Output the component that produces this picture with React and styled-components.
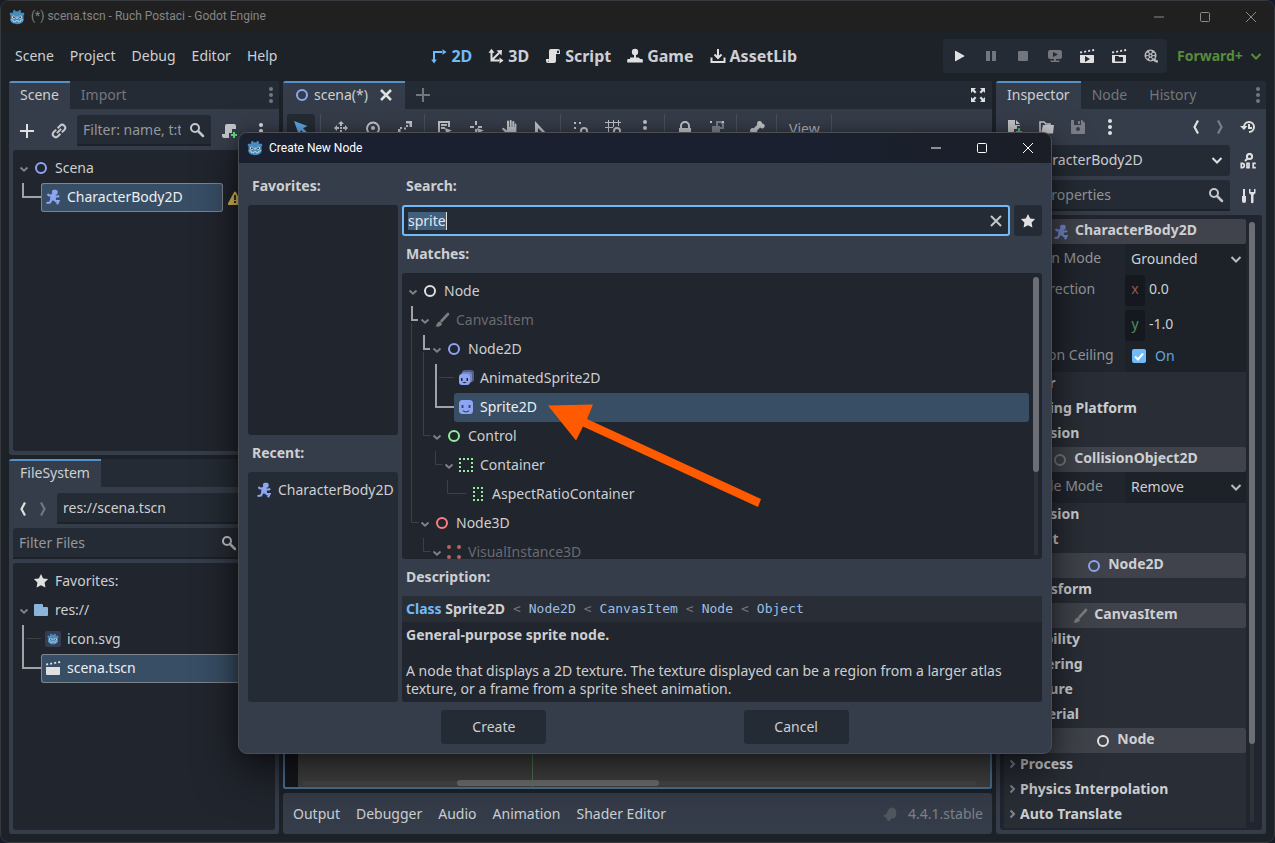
import React, { useEffect, useRef } from "react";
import styled, { createGlobalStyle } from "styled-components";

const c = {
  base: "#363d4a",
  dark: "#252b34",
  darker: "#1d2229",
  tree: "#21252d",
  section: "#292d35",
  header: "#40434b",
  accent: "#70bafa",
  accentDim: "#5591c7",
  select: "#384e65",
  text: "#cdcfd2",
  bright: "#e0e0e0",
  muted: "#73767d",
  blue: "#8da5f3",
  green: "#8eef97",
  red: "#fc7f7f",
};

const Global = createGlobalStyle`
  *, *::before, *::after { box-sizing: border-box; }
  body {
    margin: 0;
    background: #171b2a;
    color: ${c.text};
    font: 14px/18px "Noto Sans", sans-serif;
    overflow: hidden;
  }
  button, input, select { font: inherit; color: inherit; margin: 0; }
  button { background: none; border: 0; padding: 0; }
  ul { list-style: none; margin: 0; padding: 0; }
`;

/* ---------- icons ---------- */

const Svg = styled.svg`
  display: block;
  flex: none;
  width: ${(p) => p.$size || 16}px;
  height: ${(p) => p.$size || 16}px;
  color: ${(p) => p.$color || c.bright};
  fill: currentColor;
`;

const L = ({ d, w = 2, ...rest }) => (
  <path d={d} fill="none" stroke="currentColor" strokeWidth={w} {...rest} />
);

const clapDots = (
  <path d="M1 3.6 3 3.2 3.3 5 1.3 5.4zM5 2.9l2-.4.3 1.8-2 .4zM9 2.2l2-.4.3 1.8-2 .4zM13 1.4l2-.4.3 1.9-2 .4z" />
);

const art = {
  add: <path d="M7 1v6H1v2h6v6h2V9h6V7H9V1z" />,
  link: (
    <g transform="rotate(-45 8 8)">
      <L d="M7 5H3.5a3 3 0 0 0 0 6H7M9 5h3.5a3 3 0 0 1 0 6H9M5 8h6" />
    </g>
  ),
  search: (
    <>
      <circle cx="6" cy="6" r="4" fill="none" stroke="currentColor" strokeWidth="2" />
      <L d="M9 9l5 5" w={2.5} strokeLinecap="round" />
    </>
  ),
  script: (
    <path
      fillRule="evenodd"
      d="M6 1a2 2 0 0 0-2 2v8H1v2a2 2 0 0 0 2 2h6a2 2 0 0 0 2-2V6h4V3a2 2 0 0 0-2-2zM12 3.5a1 1 0 0 1 2 0V5h-2zM4 12v1a1 1 0 0 1-1 1z"
    />
  ),
  scriptAdd: (
    <>
      <path d="M6 1a2 2 0 0 0-2 2v8H1v2a2 2 0 0 0 2 2h5v-5h3V6h4V3a2 2 0 0 0-2-2z" />
      <path d="M12 9h2v2h2v2h-2v2h-2v-2h-2v-2h2z" fill="#5fdf80" />
    </>
  ),
  dots: (
    <>
      <circle cx="8" cy="2" r="2" />
      <circle cx="8" cy="8" r="2" />
      <circle cx="8" cy="14" r="2" />
    </>
  ),
  down: <L d="M3.500 6l4.500 4.500L12.500 6" />,
  arrow: <L d="M4 6.300L8 10l4-3.700" w={2.200} />,
  right: <L d="M6.500 4.500L10 8l-3.500 3.500" />,
  prev: <L d="M10 1.500L6.500 8l3.500 6.500" w={2.200} />,
  next: <L d="M6 1.500L9.500 8 6 14.500" w={2.200} />,
  ring: <circle cx="8" cy="8" r="5" fill="none" stroke="currentColor" strokeWidth="2" />,
  runner: (
    <>
      <rect x="7" y=".8" width="5.600" height="5" rx="1.800" />
      <path d="M6 5h4.500l.5 5-1 1.500H6L5 10z" />
      <L d="M6.500 6.500H4L2.500 5M10 7.500h3l1-1M6.500 10.500L5 13.500 1.500 14M9 10.500l2 1.700h2.500L12 15.200" w={2.200} />
    </>
  ),
  warning: (
    <>
      <path d="M8 1.500a1 1 0 0 0-.9.5L1 13.500A1 1 0 0 0 1.900 15h12.200a1 1 0 0 0 .9-1.500L8.900 2a1 1 0 0 0-.9-.5z" />
      <path d="M7 5h2v5H7zM7 11h2v2H7z" fill="#3a3320" />
    </>
  ),
  close: <L d="M3 3l10 10M13 3L3 13" w={2.500} />,
  clear: <L d="M3 3l10 10M13 3L3 13" />,
  star: <path d="M8 1l2.200 4.400 4.900.7-3.500 3.500.8 4.900L8 12.200l-4.400 2.300.8-4.900L.9 6.100l4.900-.7z" />,
  folder: <path d="M2 2a1 1 0 0 0-1 1v10a1 1 0 0 0 1 1h12a1 1 0 0 0 1-1V6a1 1 0 0 0-1-1h-4V3a1 1 0 0 0-1-1z" />,
  clapper: (
    <>
      {clapDots}
      <path d="M1 7h14v7a1 1 0 0 1-1 1H2a1 1 0 0 1-1-1z" />
    </>
  ),
  playScene: (
    <>
      {clapDots}
      <path fillRule="evenodd" d="M1 7h14v7a1 1 0 0 1-1 1H2a1 1 0 0 1-1-1zM6 8v6l5-3z" />
    </>
  ),
  playCustom: (
    <>
      {clapDots}
      <path fillRule="evenodd" d="M1 7h14v7a1 1 0 0 1-1 1H2a1 1 0 0 1-1-1zM4 8v5.500h8V9H8L7.500 8z" />
    </>
  ),
  play: <path d="M4 3.500v9a.7.7 0 0 0 1 .6l8-4.500a.7.7 0 0 0 0-1.200L5 2.900a.7.7 0 0 0-1 .6z" />,
  pause: <path d="M3 3h4v10H3zM9 3h4v10H9z" />,
  stop: <rect x="3" y="3" width="10" height="10" rx="1" />,
  remote: (
    <path
      fillRule="evenodd"
      d="M3 2a2 2 0 0 0-2 2v5a2 2 0 0 0 2 2h4v1.500H3.500V14h9v-1.500H9V11h4a2 2 0 0 0 2-2V4a2 2 0 0 0-2-2zM6 4l5 2.500L6 9z"
    />
  ),
  movie: (
    <path
      fillRule="evenodd"
      d="M7.500 1.500a6 6 0 1 0 3 11.200c1 1.300 2.500 2 4.500 1.800v-2c-1.500 0-2.300-.8-2.300-2A6 6 0 0 0 7.500 1.500zm0 1.300a1.300 1.300 0 1 1 0 2.600 1.300 1.300 0 0 1 0-2.600zm-3 1.900a1.300 1.300 0 1 1 0 2.600 1.300 1.300 0 0 1 0-2.600zm6 0a1.300 1.300 0 1 1 0 2.600 1.300 1.300 0 0 1 0-2.600zm-3 2a.9.900 0 1 1 0 1.800.9.900 0 0 1 0-1.800zm-3 1.300a1.300 1.300 0 1 1 0 2.600 1.300 1.300 0 0 1 0-2.600zm6 0a1.300 1.300 0 1 1 0 2.600 1.300 1.300 0 0 1 0-2.600zm-3 1.700a1.300 1.300 0 1 1 0 2.600 1.300 1.300 0 0 1 0-2.600z"
    />
  ),
  ws2d: (
    <>
      <L d="M3 12V4h8" />
      <path d="M3 15.500L.2 11.500h5.600zM15.500 4L11.500 1.200v5.600z" />
    </>
  ),
  ws3d: (
    <>
      <L d="M3.500 4v8.500h8M4 12l7-7" />
      <path d="M3.500 .8L.5 4.800h6zM15.500 12.500l-4-3v6zM14 2L8.500 2.500 13.500 7.500z" />
    </>
  ),
  game: (
    <>
      <circle cx="8" cy="4" r="3.200" />
      <path d="M7 6h2v3.500h2a2 2 0 0 1 2 1.500h2a1 1 0 0 1 .8 1v2.500H.2V12a1 1 0 0 1 .8-1h2V9.500h4z" />
    </>
  ),
  download: <L d="M8 1v8M4.500 6.500L8 10l3.500-3.500M1.500 9.500V14h13V9.500" />,
  expand: (
    <path d="M1 1h5L4.300 2.700l2.200 2.200-1.600 1.600L2.700 4.300 1 6zM15 1v5l-1.700-1.700-2.200 2.200-1.600-1.600 2.200-2.200L10 1zM1 15v-5l1.700 1.700 2.200-2.200 1.600 1.600-2.200 2.200L6 15zM15 15h-5l1.700-1.700-2.200-2.200 1.600-1.600 2.200 2.200L15 10z" />
  ),
  cursor: <path d="M1 1l4.800 13.500 2.300-4.200 4.200 4.200 2-2-4.200-4.200L14.500 6z" />,
  move: (
    <>
      <path d="M8 1l3 3H5zM8 15l-3-3h6zM1 8l3-3v6zM15 8l-3 3V5z" />
      <path d="M7 7h2v2H7zM7 4h2v2H7zM7 10h2v2H7zM4 7h2v2H4zM10 7h2v2h-2z" />
    </>
  ),
  rotate: (
    <>
      <L d="M4 13a6 6 0 1 1 8 0" />
      <circle cx="8" cy="8" r="2" />
    </>
  ),
  scale: (
    <>
      <path d="M9 1h6v6h-2.500V3.500H9zM1 9h2.500v3.500H7V15H1z" />
      <path d="M9 5h2v2H9zM7 7.500h2v2H7zM3 7h2v2H3z" />
    </>
  ),
  list: (
    <>
      <L d="M2 15V2h10v5M4 5h6M4 8h4" />
      <path d="M8 8l7 2.500-3 1 3 3-1.500 1.500-3-3-1 2.500z" />
    </>
  ),
  pivot: (
    <>
      <L d="M7 1v4M1 7h4M9 7h4M7 9v4" />
      <path d="M8 8l7 2.500-3 1 3 3-1.500 1.500-3-3-1 2.500z" />
    </>
  ),
  hand: (
    <path d="M6 1.500a1 1 0 0 1 2 0V7h.7V1a1 1 0 0 1 2 0v6h.600V2a1 1 0 0 1 2 0v5h.4V4a.9.900 0 0 1 1.700 0v7a4 4 0 0 1-4 4H9c-2 0-3-.8-4-2L1.500 9.500a1 1 0 0 1 1.600-1.200L6 10.500z" />
  ),
  ruler: <path fillRule="evenodd" d="M2 1v14h13zM5 8l4 4H5z" />,
  snap: (
    <>
      <path d="M1 2h2v2H1zM6 2h2v2H6zM1 7h2v2H1zM1 12h2v2H1z" />
      <L d="M8 15v-4a3 3 0 0 1 6 0v4" />
    </>
  ),
  grid: (
    <>
      <L d="M3.500 0v14M8.500 0v7M13.500 0v6M0 2.500h16M0 7.500h8M0 12.500h6" w={1} />
      <L d="M9 15v-4a3 3 0 0 1 6 0v4" />
    </>
  ),
  lock: (
    <path
      fillRule="evenodd"
      d="M8 1a5 5 0 0 0-5 5v2H2v7h12V8h-1V6a5 5 0 0 0-5-5zm0 2a3 3 0 0 1 3 3v2H5V6a3 3 0 0 1 3-3z"
    />
  ),
  group: (
    <>
      <path d="M1 1h2v2H1zM13 1h2v2h-2zM1 13h2v2H1zM13 13h2v2h-2z" />
      <path fillRule="evenodd" opacity=".5" d="M7 1h6v2h2v6h-4v4H3V6h4zM9 3v3h2v1h2V4h-1V3z" />
    </>
  ),
  bone: <path d="M10.500 1A2.500 2.500 0 0 0 8.300 4.700L4.700 8.300A2.500 2.500 0 1 0 3.500 13a2.500 2.500 0 1 0 4.400-2.200l3.300-3.300A2.500 2.500 0 1 0 13 3.500 2.500 2.500 0 0 0 10.500 1z" />,
  fileAdd: (
    <>
      <path d="M2 1v14h6v-5h3V7h3V6H9V1zM10 1v4h4z" />
      <path d="M12 9h2v3h2v2h-2v2h-2v-2h-2v-2h2z" fill="#4fb96c" />
    </>
  ),
  open: (
    <>
      <L d="M2 14V3h4l2 2h4v2" w={1.500} />
      <path d="M5 6h11l-1 8.500H3z" />
    </>
  ),
  save: (
    <path
      fillRule="evenodd"
      d="M2 1a1 1 0 0 0-1 1v12a1 1 0 0 0 1 1h12a1 1 0 0 0 1-1V4l-3-3h-1v5H4V1zm6 1v3h2V2zM8 8a2 2 0 1 1 0 4 2 2 0 0 1 0-4z"
    />
  ),
  history: (
    <>
      <L d="M4 8a5 5 0 1 1 5 5M9 5v4h3" />
      <path d="M0 7h7.500L4 11z" />
    </>
  ),
  doc: (
    <>
      <circle cx="9.500" cy="3.500" r="2.600" fill="none" stroke="currentColor" strokeWidth="2" />
      <L d="M7.500 5.500L5 8" />
      <L d="M1.300 9.500v6M1 10.400h1.200a2.100 2.100 0 0 1 0 4.200H1M7 10.400h2v4.200H7zM15.800 10.400h-2.600v4.200h2.600" w={1.700} />
    </>
  ),
  tools: (
    <>
      <L d="M4 1v8" w={2} />
      <path d="M2 8h4v5a2 2 0 0 1-4 0z" />
      <path d="M9 1v4l2 2v7a1.200 1.200 0 0 0 2.500 0V7l2-2V1h-1.500v3h-3.500V1z" />
    </>
  ),
  brush: (
    <>
      <L d="M14 2L7.500 9" w={2.600} strokeLinecap="round" />
      <path d="M6 9.500L8 11.500C8 14 5 15 1.500 14.500 3 13 2.500 10 6 9.500z" />
    </>
  ),
  sprite: (
    <>
      <rect x="1" y="1" width="14" height="14" rx="3.500" />
      <path d="M3.500 6h2v3h-2zM10.500 6h2v3h-2z" fill="#384e65" />
      <path d="M5 11.500c1 1.700 5 1.700 6 0" fill="none" stroke="#384e65" strokeWidth="1.300" />
    </>
  ),
  animSprite: (
    <>
      <rect x="4" y="0" width="12" height="12" rx="3" opacity=".45" />
      <rect x="3" y="2" width="11" height="11" rx="3" opacity=".6" />
      <rect x="1" y="4" width="11" height="11" rx="3" />
      <path d="M3 8h1.500v3H3zM8.500 8H10v3H8.500z" fill="#21252d" />
      <path d="M4.500 12h4c-.5 1.500-3.500 1.500-4 0z" fill="#21252d" />
    </>
  ),
  container: (
    <path d="M1 1h2v2H1zM5 1h2v2H5zM9 1h2v2H9zM13 1h2v2h-2zM1 5h2v2H1zM13 5h2v2h-2zM1 9h2v2H1zM13 9h2v2h-2zM1 13h2v2H1zM5 13h2v2H5zM9 13h2v2H9zM13 13h2v2h-2z" />
  ),
  aspect: (
    <path d="M3 1h2v2H3zM7 1h2v2H7zM11 1h2v2h-2zM3 5h2v2H3zM11 5h2v2h-2zM3 9h2v2H3zM11 9h2v2h-2zM3 13h2v2H3zM7 13h2v2H7zM11 13h2v2h-2z" />
  ),
  visual: (
    <>
      <circle cx="3" cy="3" r="2" />
      <circle cx="13" cy="3" r="2" />
      <circle cx="3" cy="13" r="2" />
      <circle cx="13" cy="13" r="2" />
    </>
  ),
  bell: <path d="M9.500 1.200l3.500 1.600c1.500 1.600 1.500 4 1 6L13 12l-4.500 1-.8 2.200-3-1 .3-1.700L1 9.800l3.500-2C5.500 5 7 2 9.500 1.200z" />,
  winMin: <path d="M3 7.500h10v1H3z" />,
  winMax: <rect x="3.500" y="3.500" width="9" height="9" rx="1" fill="none" stroke="currentColor" />,
  winClose: <L d="M3 3l10 10M13 3L3 13" w={1} />,
};

const Icon = ({ name, color, size, label }) => (
  <Svg viewBox="0 0 16 16" $color={color} $size={size} role={label ? "img" : undefined} aria-label={label} aria-hidden={label ? undefined : true}>
    {art[name]}
  </Svg>
);

const GodotLogo = ({ boxed }) => (
  <Svg viewBox="0 0 16 16" aria-hidden>
    {boxed && <rect width="16" height="16" rx="2" fill="#363d52" />}
    <g transform={boxed ? "translate(2 2) scale(.75)" : undefined}>
      <path
        fill="#478cbf"
        d="M6 .8l.6 1.600a8 8 0 0 1 2.800 0L10 .8l2 .9-.2 1.600 1 .8 1.500-.7 1.200 1.700-1 1.300V11c0 2.500-3 4.200-6.500 4.200S1.500 13.500 1.500 11V6.400L.5 5.100l1.200-1.700 1.500.7 1-.8L4 1.700z"
      />
      <circle cx="4.700" cy="8.200" r="1.600" fill="#dfe6ec" />
      <circle cx="11.300" cy="8.200" r="1.600" fill="#dfe6ec" />
      <circle cx="4.900" cy="8.300" r="1" fill="#414042" />
      <circle cx="11.100" cy="8.300" r="1" fill="#414042" />
      <path d="M7.500 7.500h1v2.200h-1z" fill="#dfe6ec" />
      <path d="M1.600 10.700l2.700.4.300 1.600 2 .2.200-1.200h2.400l.2 1.200 2-.2.300-1.600 2.700-.4" fill="none" stroke="#dfe6ec" strokeWidth=".7" />
    </g>
  </Svg>
);

/* ---------- window frame ---------- */

const Window = styled.div`
  position: relative;
  display: flex;
  flex-direction: column;
  height: 100vh;
  border: 1px solid #36393d;
  border-radius: 9px;
  overflow: hidden;
  background: ${c.darker};
`;

const TitleBar = styled.header`
  display: flex;
  align-items: center;
  flex: none;
  height: ${(p) => (p.$active ? 30 : 31)}px;
  padding-left: 8px;
  background: ${(p) => (p.$active ? "linear-gradient(90deg, #1a2030 70%, #1b1e26)" : "#202020")};
  color: ${(p) => (p.$active ? "#fff" : "#858585")};
  font: 12px/16px Roboto, sans-serif;
`;

const TitleText = styled.h1`
  flex: 1;
  margin: 0;
  padding: 0 0 1px 6px;
  font: inherit;
`;

const WinButton = styled.button`
  display: grid;
  place-items: center;
  width: 46px;
  height: 100%;
`;

const WindowButtons = ({ color }) => (
  <>
    <WinButton aria-label="Minimize"><Icon name="winMin" color={color} /></WinButton>
    <WinButton aria-label="Maximize"><Icon name="winMax" color={color} /></WinButton>
    <WinButton aria-label="Close"><Icon name="winClose" color={color} /></WinButton>
  </>
);

/* ---------- top bar ---------- */

const MenuBar = styled.nav`
  display: flex;
  align-items: center;
  justify-content: space-between;
  flex: none;
  height: 49px;
  padding: 0 10px 1px 6px;
`;

const Group = styled.div`
  display: flex;
  align-items: center;
`;

const TextButton = styled.button`
  padding: 4px 8px;
`;

const ScreenButton = styled.button`
  display: flex;
  align-items: center;
  gap: 4px;
  padding: 4px 8px;
  font-size: 16px;
  font-weight: 700;
  line-height: 22px;
  color: ${(p) => (p.$active ? c.accent : c.text)};
`;

const RightGroup = styled(Group)`
  gap: 10px;
`;

const RunBar = styled(Group)`
  height: 34px;
  border-radius: 3px;
  background: ${c.dark};
`;

const RunButton = styled.button`
  display: grid;
  place-items: center;
  width: 32px;
  height: 34px;
`;

const SelectWrap = styled.label`
  display: flex;
  align-items: center;
  gap: ${(p) => (p.$bold ? 5 : 0)}px;
  min-width: 0;
  color: ${(p) => p.$color || c.text};
  font-weight: ${(p) => (p.$bold ? 700 : 400)};
`;

const Select = styled.select`
  appearance: none;
  flex: 1;
  min-width: 0;
  border: 0;
  padding: 0;
  background: none;
  outline: none;
`;

/* ---------- docks ---------- */

const Docks = styled.main`
  display: flex;
  flex: 1;
  min-height: 0;
  gap: 4px;
  padding: 0 8px 8px;
`;

const Column = styled.div`
  display: flex;
  flex-direction: column;
  gap: 4px;
  min-width: 0;
  min-height: 0;
  ${(p) => (p.$width ? `flex: none; width: ${p.$width}px;` : "flex: 1;")}
`;

const Dock = styled.section`
  display: flex;
  flex-direction: column;
  flex: ${(p) => p.$grow || 1} 1 0;
  min-height: 0;
  border-radius: 3px;
  overflow: hidden;
  background: ${c.base};
`;

const TabBar = styled.div`
  display: flex;
  align-items: stretch;
  flex: none;
  height: 28px;
  background: ${c.dark};
`;

const Tab = styled.button`
  display: flex;
  align-items: center;
  gap: 4px;
  padding: 0 11px 2px;
  border-top: 2px solid ${(p) => (p.$active ? c.accentDim : "transparent")};
  background: ${(p) => (p.$active ? c.base : "transparent")};
  color: ${(p) => (p.$active ? c.text : c.muted)};
`;

const TabClose = styled.span`
  padding-left: 6px;
`;

const Spacer = styled.div`
  flex: 1;
`;

const DockBody = styled.div`
  display: flex;
  flex-direction: column;
  flex: 1;
  gap: 4px;
  min-height: 0;
  padding: ${(p) => p.$top || 6}px 4px 4px;
`;

const Tools = styled.div`
  display: flex;
  align-items: center;
  flex: none;
  gap: ${(p) => p.$gap ?? 4}px;
`;

const ToolButton = styled.button`
  display: grid;
  place-items: center;
  flex: none;
  width: ${(p) => p.$width || 28}px;
  height: 28px;
  border-radius: 3px;
  background: ${(p) => (p.$fill ? c.dark : "none")};
`;

const Field = styled.label`
  display: flex;
  align-items: center;
  flex: 1;
  min-width: 0;
  height: 31px;
  gap: 8px;
  padding: 0 6px;
  border-bottom: 2px solid ${c.darker};
  border-radius: 3px 3px 0 0;
  background: ${c.dark};
`;

const Input = styled.input`
  flex: 1;
  min-width: 0;
  width: 0;
  border: 0;
  padding: 0;
  background: none;
  outline: none;
  &::placeholder { color: #94979c; opacity: 1; }
`;

/* ---------- trees ---------- */

const TreeBox = styled.div`
  position: relative;
  flex: 1;
  min-height: 0;
  padding: 4px;
  border-radius: 3px;
  overflow: hidden;
  background: ${(p) => p.$bg || c.tree};
`;

const TreeRow = styled.li`
  display: flex;
  align-items: center;
  height: 29px;
  padding-left: ${(p) => p.$level * 12}px;
  margin-right: ${(p) => p.$inset || 0}px;
  color: ${(p) => (p.$dim ? "#686b71" : c.text)};
`;

const Fold = styled.span`
  display: grid;
  place-items: center;
  flex: none;
  width: 12px;
`;

const TreeItem = styled.span`
  display: flex;
  align-items: center;
  flex: 1;
  gap: 6px;
  height: 29px;
  padding: 0 4px 2px;
  border-radius: 3px;
  white-space: nowrap;
  ${(p) => p.$selected && `background: ${c.select}; color: #eceef0;`}
  ${(p) => p.$outlined && "box-shadow: inset 0 0 0 1px #7f858d;"}
`;

const Guides = styled.svg`
  position: absolute;
  left: 0;
  top: 0;
  width: 100%;
  height: 100%;
  pointer-events: none;
  fill: none;
`;

const Trailing = styled.span`
  display: flex;
  width: 48px;
  padding-left: 4px;
`;

const TreeView = ({ items, inset, outlined }) => (
  <ul>
    {items.map((it) => (
      <TreeRow key={it.text} $level={it.level} $dim={it.dim} $inset={inset}>
        <Fold>{it.fold && <Icon name="arrow" size={14} color="#7f8287" />}</Fold>
        <TreeItem $selected={it.selected} $outlined={it.selected && outlined}>
          {it.icon === "logo" ? <GodotLogo boxed /> : <Icon name={it.icon} color={it.color} />}
          {it.text}
        </TreeItem>
        {it.warn && (
          <Trailing><Icon name="warning" color="#dfc05a" label="Configuration warning" /></Trailing>
        )}
      </TreeRow>
    ))}
  </ul>
);

const GUIDE = "#a0a2a6";
const FAINT = "#3c4047";

const sceneItems = [
  { text: "Scena", level: 0, icon: "ring", color: c.blue, fold: true },
  { text: "CharacterBody2D", level: 1, icon: "runner", color: c.blue, selected: true, warn: true },
];

const fileItems = [
  { text: "Favorites:", level: 0, icon: "star" },
  { text: "res://", level: 0, icon: "folder", color: "#8ab4da", fold: true },
  { text: "icon.svg", level: 1, icon: "logo" },
  { text: "scena.tscn", level: 1, icon: "clapper", selected: true },
];

const matches = [
  { text: "Node", level: 0, icon: "ring", fold: true },
  { text: "CanvasItem", level: 1, icon: "brush", color: "#7d7d7d", fold: true, dim: true },
  { text: "Node2D", level: 2, icon: "ring", color: c.blue, fold: true },
  { text: "AnimatedSprite2D", level: 3, icon: "animSprite", color: c.blue },
  { text: "Sprite2D", level: 3, icon: "sprite", color: c.blue, selected: true },
  { text: "Control", level: 2, icon: "ring", color: c.green, fold: true },
  { text: "Container", level: 3, icon: "container", color: c.green, fold: true },
  { text: "AspectRatioContainer", level: 4, icon: "aspect", color: c.green },
  { text: "Node3D", level: 1, icon: "ring", color: c.red, fold: true },
  { text: "VisualInstance3D", level: 2, icon: "visual", color: "#b56464", fold: true, dim: true },
];

/* ---------- 2D editor ---------- */

const CanvasTools = styled(Tools)`
  padding: 5px 4px;
  color: #b0b2b6;
`;

const ViewButton = styled.button`
  padding: 4px 6px 2px;
`;

const Divider = styled.i`
  flex: none;
  width: 1px;
  height: 28px;
  margin: 0 2px 0 1px;
  background: #4a505c;
`;

const Viewport = styled.div`
  position: relative;
  flex: 1;
  border: 2px solid #4b7599;
  border-top: 0;
  background: linear-gradient(90deg, #16191d 13px, #444 13px);
`;

const AxisLine = styled.i`
  position: absolute;
  left: 35%;
  top: 0;
  bottom: 0;
  width: 1px;
  background: #58805a;
`;

const ViewScroll = styled.i`
  position: absolute;
  left: 17px;
  right: 14px;
  bottom: 2px;
  height: 4px;
  border-radius: 3px;
  background: #4b4b4b;
  &::after {
    content: "";
    position: absolute;
    left: 23%;
    width: 30%;
    top: -1px;
    height: 6px;
    border-radius: 3px;
    background: #727272;
  }
`;

const BottomBar = styled.footer`
  display: flex;
  align-items: center;
  flex: none;
  height: 41px;
  padding: 0 9px 0 2px;
  border-radius: 3px;
  background: ${c.base};
`;

const Version = styled.span`
  padding-left: 10px;
  color: #7d828a;
`;

/* ---------- inspector ---------- */

const ObjectSelect = styled(SelectWrap)`
  flex: 1;
  height: 31px;
  gap: 5px;
  padding: 0 5px 2px 6px;
  border-radius: 3px;
  background: ${c.dark};
`;

const InspectorBox = styled(TreeBox)`
  display: flex;
  padding: 4px 7px 0 4px;
  gap: 3px;
`;

const Properties = styled.div`
  flex: 1;
  min-width: 0;
`;

const Category = styled.h3`
  display: flex;
  align-items: center;
  justify-content: center;
  gap: 6px;
  height: 25px;
  margin: 0;
  padding-bottom: 3px;
  border-radius: 2px;
  background: ${c.header};
  font-size: 14px;
`;

const CategoryIcon = styled.span`
  padding-top: 4px;
`;

const Section = styled.h4`
  display: flex;
  align-items: center;
  height: 25px;
  margin: 0;
  padding-bottom: 3px;
  background: ${c.section};
  font-size: 14px;
`;

const Property = styled.div`
  display: grid;
  grid-template-columns: 1fr 1fr;
  color: #94979b;
`;

const PropName = styled.label`
  height: 31px;
  padding: 5px 0 0 9px;
  white-space: nowrap;
`;

const PropValue = styled.div`
  display: flex;
  flex-direction: column;
  gap: 4px;
  background: ${c.darker};
`;

const ValueSelect = styled(SelectWrap)`
  height: 31px;
  padding: 0 2px 2px 6px;
`;

const Axis = styled.label`
  display: flex;
  align-items: center;
  height: 31px;
  gap: 4px;
  color: ${c.text};
`;

const AxisInput = styled(Input)`
  padding-bottom: 4px;
`;

const AxisName = styled.span`
  width: 20px;
  height: 31px;
  border-radius: 3px;
  background: #15181e;
  color: ${(p) => p.$color};
  text-align: center;
  line-height: 28px;
`;

const CheckLabel = styled.label`
  display: flex;
  align-items: center;
  height: 31px;
  gap: 9px;
  padding: 0 0 2px 7px;
  color: #64a5de;
`;

const Check = styled.input`
  appearance: none;
  width: 14px;
  height: 14px;
  margin: 0;
  border-radius: 2px;
  background: ${c.accent} url("data:image/svg+xml,%3Csvg xmlns='http://www.w3.org/2000/svg' viewBox='0 0 14 14'%3E%3Cpath d='M3 7.500l3 3 5-6' fill='none' stroke='white' stroke-width='2'/%3E%3C/svg%3E");
`;

const ScrollTrack = styled.div`
  flex: none;
  width: 6px;
  margin: ${(p) => p.$margin || "3px 0 8px"};
  border-radius: 3px;
  background: linear-gradient(90deg, transparent 1px, #2d3139 1px 5px, transparent 5px);
  &::before {
    content: "";
    display: block;
    height: ${(p) => p.$length};
    border-radius: 3px;
    background: #6b6e74;
  }
`;

const FoldSection = ({ children }) => (
  <Section>
    <Icon name="right" color="#85888d" />
    {children}
  </Section>
);

const CategoryHead = ({ icon, color, children }) => (
  <Category>
    <CategoryIcon><Icon name={icon} color={color} /></CategoryIcon>
    {children}
  </Category>
);

/* ---------- dialog ---------- */

const Dialog = styled.div`
  position: absolute;
  left: 237px;
  right: 222px;
  top: 131px;
  bottom: 88px;
  display: flex;
  flex-direction: column;
  border: 1px solid #4c4d50;
  border-radius: 9px;
  overflow: hidden;
  background: ${c.base};
`;

const DialogShadow = styled.div`
  position: absolute;
  left: 237px;
  right: 222px;
  top: 131px;
  bottom: 88px;
  border-radius: 9px;
  box-shadow: 0 18px 44px rgba(0, 0, 0, 0.6), 0 0 12px rgba(0, 0, 0, 0.25);
`;

const DialogBody = styled.div`
  display: flex;
  flex: 1;
  min-height: 0;
  gap: 4px;
  padding: 9px 9px 0;
`;

const Side = styled.div`
  display: flex;
  flex-direction: column;
  gap: 4px;
  min-width: 0;
  min-height: 0;
  ${(p) => (p.$width ? `flex: none; width: ${p.$width}px;` : "flex: 1;")}
`;

const Caption = styled.h2`
  flex: none;
  height: 29px;
  margin: 0;
  padding-left: 4px;
  font-size: 14px;
  line-height: 27px;
`;

const SearchRow = styled.div`
  display: flex;
  flex: none;
  gap: 4px;
`;

const SearchField = styled.div`
  display: flex;
  align-items: center;
  flex: 1;
  height: 31px;
  padding: 0 4px;
  border: 2px solid ${c.accent};
  border-radius: 3px;
  background: ${c.dark};
`;

const SearchInput = styled.input`
  field-sizing: content;
  border: 0;
  padding: 0;
  background: none;
  outline: none;
  line-height: 18px;
  color: #e4e6e8;
  &::selection { background: #41607f; color: #e4e6e8; }
`;

const Caret = styled.i`
  width: 1px;
  height: 18px;
  background: #e0e0e0;
`;

const StarButton = styled(ToolButton)`
  height: 31px;
`;

const MatchBox = styled(TreeBox)`
  display: flex;
  padding: 4px 3px 0 4px;
  & > ul { flex: 1; }
`;

const Doc = styled.article`
  flex: none;
  height: 106px;
  border-radius: 3px;
  overflow: hidden;
  background: ${c.tree};
`;

const DocHead = styled.div`
  display: flex;
  align-items: center;
  gap: 8px;
  height: 26px;
  padding-left: 4px;
  background: ${c.section};
  font-family: "DejaVu Sans Mono", monospace;
  font-size: 13px;
  color: #73767d;
`;

const DocClass = styled.strong`
  font-family: "Noto Sans", sans-serif;
  font-size: 14px;
  color: ${c.text};
  & > span { color: ${c.accent}; }
`;

const DocLink = styled.a`
  color: #9abfe2;
  text-decoration: none;
`;

const DocText = styled.p`
  margin: 0 0 18px;
  padding: 0 4px;
`;

const DocBody = styled.div`
  padding-top: 4px;
`;

const DialogButtons = styled.div`
  display: flex;
  justify-content: space-evenly;
  flex: none;
  gap: 4px;
  padding: 8px 9px 9px;
`;

const DialogButton = styled.button`
  width: 105px;
  height: 34px;
  border-radius: 3px;
  background: ${c.dark};
`;

const Pointer = styled.svg`
  position: absolute;
  left: 547px;
  top: 402px;
  width: 216px;
  height: 108px;
  fill: #ff5a00;
`;

function SceneDock() {
  return (
    <Dock $grow={374}>
      <TabBar>
        <Tab $active>Scene</Tab>
        <Tab>Import</Tab>
        <Spacer />
        <ToolButton $width={16} aria-label="Dock options"><Icon name="dots" color={c.muted} /></ToolButton>
      </TabBar>
      <DockBody>
        <Tools>
          <ToolButton aria-label="Add node"><Icon name="add" /></ToolButton>
          <ToolButton aria-label="Instantiate scene"><Icon name="link" color="#c4c6c9" /></ToolButton>
          <Field>
            <Input aria-label="Filter nodes" placeholder="Filter: name, t:type" />
            <Icon name="search" color="#c4c6c9" />
          </Field>
          <ToolButton aria-label="Attach script"><Icon name="scriptAdd" color="#c4c6c9" /></ToolButton>
          <ToolButton aria-label="More"><Icon name="dots" /></ToolButton>
        </Tools>
        <TreeBox>
          <Guides><path d="M10 33v14h18" stroke={GUIDE} strokeWidth="2" /></Guides>
          <TreeView items={sceneItems} outlined />
        </TreeBox>
      </DockBody>
    </Dock>
  );
}

function FileDock() {
  return (
    <Dock $grow={375}>
      <TabBar><Tab $active>FileSystem</Tab></TabBar>
      <DockBody>
        <Tools>
          <Tools $gap={0}>
            <ToolButton $width={20} aria-label="Back"><Icon name="prev" /></ToolButton>
            <ToolButton $width={20} aria-label="Forward"><Icon name="next" color={c.muted} /></ToolButton>
          </Tools>
          <Field><Input aria-label="Path" defaultValue="res://scena.tscn" /></Field>
          <ToolButton aria-label="Split mode"><Icon name="dots" /></ToolButton>
        </Tools>
        <Tools>
          <Field>
            <Input aria-label="Filter files" placeholder="Filter Files" />
            <Icon name="search" color="#c4c6c9" />
          </Field>
          <ToolButton aria-label="Sort"><Icon name="dots" /></ToolButton>
        </Tools>
        <TreeBox>
          <Guides>
            <path d="M10 62v43h18" stroke={GUIDE} strokeWidth="2" />
            <path d="M13 75.500h15" stroke={FAINT} />
          </Guides>
          <TreeView items={fileItems} outlined />
        </TreeBox>
      </DockBody>
    </Dock>
  );
}

const canvasGroups = [
  ["move", "rotate", "scale"],
  ["list", "pivot", "hand", "ruler"],
  ["snap", "grid", "dots"],
  ["lock", "group"],
  ["bone"],
];

function Editor2D() {
  return (
    <Column>
      <Dock>
        <TabBar>
          <Tab $active>
            <Icon name="ring" color={c.blue} />
            scena(*)
            <TabClose><Icon name="close" /></TabClose>
          </Tab>
          <ToolButton $width={36} aria-label="New scene"><Icon name="add" color={c.muted} /></ToolButton>
          <Spacer />
          <ToolButton aria-label="Distraction free mode"><Icon name="expand" /></ToolButton>
        </TabBar>
        <CanvasTools>
          <ToolButton $fill aria-label="Select"><Icon name="cursor" color="#62a5e0" /></ToolButton>
          {canvasGroups.map((names) => (
            <React.Fragment key={names[0]}>
              <Divider />
              {names.map((n) => (
                <ToolButton key={n} aria-label={n}><Icon name={n} color="#c4c6c9" /></ToolButton>
              ))}
            </React.Fragment>
          ))}
          <Divider />
          <ViewButton>View</ViewButton>
          <Divider />
        </CanvasTools>
        <Viewport>
          <AxisLine />
          <ViewScroll />
        </Viewport>
      </Dock>
      <BottomBar>
        {["Output", "Debugger", "Audio", "Animation", "Shader Editor"].map((t) => (
          <TextButton key={t}>{t}</TextButton>
        ))}
        <Spacer />
        <Icon name="bell" color="#51565f" label="Notifications" />
        <Version>4.4.1.stable</Version>
      </BottomBar>
    </Column>
  );
}

function Inspector() {
  return (
    <Column $width={270}>
      <Dock>
        <TabBar>
          <Tab $active>Inspector</Tab>
          <Tab>Node</Tab>
          <Tab>History</Tab>
          <Spacer />
          <ToolButton $width={16} aria-label="Dock options"><Icon name="dots" color={c.muted} /></ToolButton>
        </TabBar>
        <DockBody $top={4}>
          <Tools>
            <ToolButton aria-label="New resource"><Icon name="fileAdd" color="#c4c6c9" /></ToolButton>
            <ToolButton aria-label="Load resource"><Icon name="open" color="#c4c6c9" /></ToolButton>
            <ToolButton aria-label="Save resource"><Icon name="save" color="#7b7e85" /></ToolButton>
            <ToolButton aria-label="Resource options"><Icon name="dots" /></ToolButton>
            <Spacer />
            <ToolButton $width={20} aria-label="Previous"><Icon name="prev" /></ToolButton>
            <ToolButton $width={20} aria-label="Next"><Icon name="next" color="#7b7e85" /></ToolButton>
            <ToolButton aria-label="History"><Icon name="history" /></ToolButton>
          </Tools>
          <Tools>
            <ObjectSelect>
              <Icon name="runner" color={c.blue} />
              <Select aria-label="Object"><option>CharacterBody2D</option></Select>
              <Icon name="down" />
            </ObjectSelect>
            <ToolButton aria-label="Documentation"><Icon name="doc" /></ToolButton>
          </Tools>
          <Tools>
            <Field>
              <Input aria-label="Filter properties" placeholder="Filter Properties" />
              <Icon name="search" color="#c4c6c9" />
            </Field>
            <ToolButton aria-label="Property tools"><Icon name="tools" /></ToolButton>
          </Tools>
          <InspectorBox>
            <Properties>
              <CategoryHead icon="runner" color="#7288cf">CharacterBody2D</CategoryHead>
              <Property>
                <PropName htmlFor="motion">Motion Mode</PropName>
                <PropValue>
                  <ValueSelect as="div">
                    <Select id="motion"><option>Grounded</option></Select>
                    <Icon name="down" color="#b9bbbe" />
                  </ValueSelect>
                </PropValue>
              </Property>
              <Property>
                <PropName as="span">Up Direction</PropName>
                <PropValue>
                  <Axis><AxisName $color="#96594f">x</AxisName><AxisInput defaultValue="0.0" /></Axis>
                  <Axis><AxisName $color="#4f8f62">y</AxisName><AxisInput defaultValue="-1.0" /></Axis>
                </PropValue>
              </Property>
              <Property>
                <PropName htmlFor="ceiling">Slide on Ceiling</PropName>
                <PropValue>
                  <CheckLabel><Check id="ceiling" type="checkbox" defaultChecked />On</CheckLabel>
                </PropValue>
              </Property>
              <FoldSection>Floor</FoldSection>
              <FoldSection>Moving Platform</FoldSection>
              <FoldSection>Collision</FoldSection>
              <CategoryHead icon="ring" color="#77797b">CollisionObject2D</CategoryHead>
              <Property>
                <PropName htmlFor="disable">Disable Mode</PropName>
                <PropValue>
                  <ValueSelect as="div">
                    <Select id="disable"><option>Remove</option></Select>
                    <Icon name="down" color="#b9bbbe" />
                  </ValueSelect>
                </PropValue>
              </Property>
              <FoldSection>Collision</FoldSection>
              <FoldSection>Input</FoldSection>
              <CategoryHead icon="ring" color={c.blue}>Node2D</CategoryHead>
              <FoldSection>Transform</FoldSection>
              <CategoryHead icon="brush" color="#7d7d7d">CanvasItem</CategoryHead>
              <FoldSection>Visibility</FoldSection>
              <FoldSection>Ordering</FoldSection>
              <FoldSection>Texture</FoldSection>
              <FoldSection>Material</FoldSection>
              <CategoryHead icon="ring">Node</CategoryHead>
              <FoldSection>Process</FoldSection>
              <FoldSection>Physics Interpolation</FoldSection>
              <FoldSection>Auto Translate</FoldSection>
            </Properties>
            <ScrollTrack $length="87%" />
          </InspectorBox>
        </DockBody>
      </Dock>
    </Column>
  );
}

function CreateNodeDialog() {
  const search = useRef(null);
  useEffect(() => {
    search.current.focus();
    search.current.select();
  }, []);

  return (
    <Dialog role="dialog" aria-label="Create New Node">
      <TitleBar $active>
        <GodotLogo />
        <TitleText as="h2">Create New Node</TitleText>
        <WindowButtons color="#fff" />
      </TitleBar>
      <DialogBody>
        <Side $width={150}>
          <Caption>Favorites:</Caption>
          <TreeBox />
          <Caption>Recent:</Caption>
          <TreeBox $bg={c.dark}>
            <TreeItem>
              <Icon name="runner" color={c.blue} />
              CharacterBody2D
            </TreeItem>
          </TreeBox>
        </Side>
        <Side>
          <Caption as="label" htmlFor="search"><strong>Search:</strong></Caption>
          <SearchRow>
            <SearchField>
              <SearchInput id="search" ref={search} defaultValue="sprite" />
              <Caret />
              <Spacer />
              <button aria-label="Clear"><Icon name="clear" color="#c4c6c9" /></button>
            </SearchField>
            <StarButton $fill aria-label="Favorite"><Icon name="star" /></StarButton>
          </SearchRow>
          <Caption>Matches:</Caption>
          <MatchBox>
            <Guides>
              <g stroke={FAINT}>
                <path d="M9.500 50v199.500h7M21.500 79v83.500h7M37 104.500h15M33.500 178v13.500h7M45.500 207v13.500h19M21.500 265v13.500h7" />
              </g>
              <path d="M10 33v14h6M22 62v14h6M34 91v43h18" stroke={GUIDE} strokeWidth="2" />
            </Guides>
            <TreeView items={matches} inset={4} />
            <ScrollTrack $length="70%" $margin="0 0 4px" />
          </MatchBox>
          <Caption>Description:</Caption>
          <Doc>
            <DocHead>
              <DocClass><span>Class</span> Sprite2D</DocClass>
              {"<"}<DocLink href="#Node2D">Node2D</DocLink>
              {"<"}<DocLink href="#CanvasItem">CanvasItem</DocLink>
              {"<"}<DocLink href="#Node">Node</DocLink>
              {"<"}<DocLink href="#Object">Object</DocLink>
            </DocHead>
            <DocBody>
              <DocText><strong>General-purpose sprite node.</strong></DocText>
              <DocText>
                A node that displays a 2D texture. The texture displayed can be a region from a larger
                atlas texture, or a frame from a sprite sheet animation.
              </DocText>
            </DocBody>
          </Doc>
        </Side>
      </DialogBody>
      <DialogButtons>
        <DialogButton>Create</DialogButton>
        <DialogButton>Cancel</DialogButton>
      </DialogButtons>
    </Dialog>
  );
}

export default function App() {
  return (
    <Window>
      <Global />
      <TitleBar>
        <GodotLogo />
        <TitleText>(*) scena.tscn - Ruch Postaci - Godot Engine</TitleText>
        <WindowButtons color="#8a8a8a" />
      </TitleBar>
      <MenuBar>
        <Group>
          {["Scene", "Project", "Debug", "Editor", "Help"].map((t) => (
            <TextButton key={t}>{t}</TextButton>
          ))}
        </Group>
        <Group>
          <ScreenButton $active><Icon name="ws2d" color={c.accent} />2D</ScreenButton>
          <ScreenButton><Icon name="ws3d" />3D</ScreenButton>
          <ScreenButton><Icon name="script" />Script</ScreenButton>
          <ScreenButton><Icon name="game" />Game</ScreenButton>
          <ScreenButton><Icon name="download" />AssetLib</ScreenButton>
        </Group>
        <RightGroup>
          <RunBar>
            <RunButton aria-label="Play"><Icon name="play" /></RunButton>
            <RunButton aria-label="Pause"><Icon name="pause" color={c.muted} /></RunButton>
            <RunButton aria-label="Stop"><Icon name="stop" color={c.muted} /></RunButton>
            <RunButton aria-label="Remote deploy"><Icon name="remote" color={c.muted} /></RunButton>
            <RunButton aria-label="Play scene"><Icon name="playScene" /></RunButton>
            <RunButton aria-label="Play custom scene"><Icon name="playCustom" /></RunButton>
            <RunButton aria-label="Movie maker"><Icon name="movie" color="#b4b6b9" /></RunButton>
          </RunBar>
          <SelectWrap $bold $color="#578c3a">
            <Select aria-label="Renderer"><option>Forward+</option></Select>
            <Icon name="down" color="#578c3a" />
          </SelectWrap>
        </RightGroup>
      </MenuBar>
      <Docks>
        <Column $width={270}>
          <SceneDock />
          <FileDock />
        </Column>
        <Editor2D />
        <Inspector />
      </Docks>
      <DialogShadow />
      <CreateNodeDialog />
      <Pointer viewBox="0 0 216 108" aria-hidden>
        <path d="M0 2.500L45 1.500 39 16l174 80-3 8L35 23.500 28 37.500z" />
      </Pointer>
    </Window>
  );
}
